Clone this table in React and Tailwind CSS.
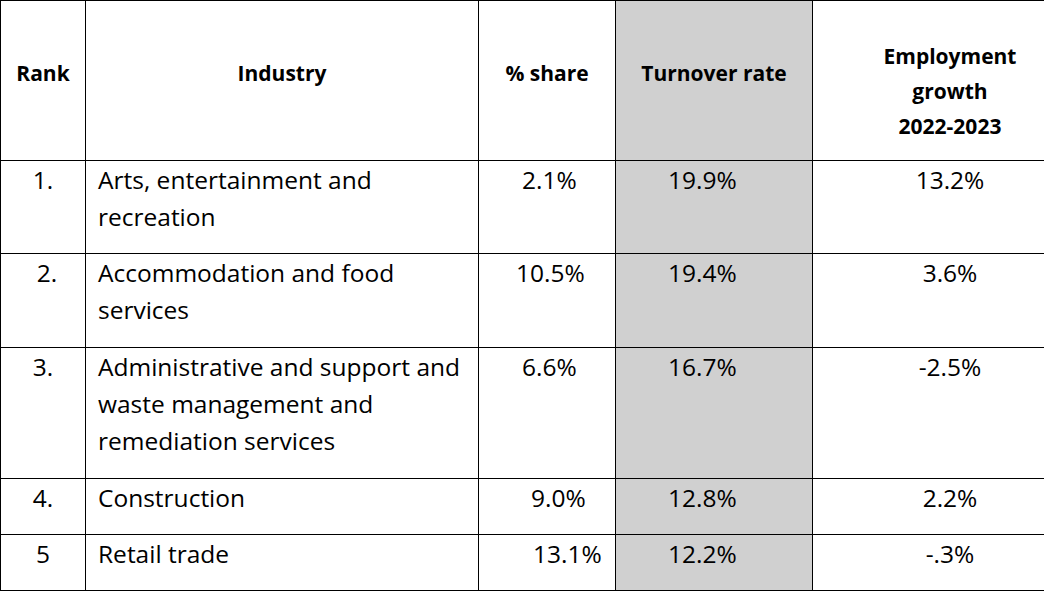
import React from "react";

const rows = [
  { rank: "1.", rankPad: "pl-0", name: ["Arts, entertainment and", "recreation"], share: "2.1%", sharePad: "pl-[43px]", turnover: "19.9%", growth: "13.2%", h: "h-[93px]" },
  { rank: "2.", rankPad: "pl-[8px]", name: ["Accommodation and food", "services"], share: "10.5%", sharePad: "pl-[37px]", turnover: "19.4%", growth: "3.6%", h: "h-[94px]" },
  { rank: "3.", rankPad: "pl-0", name: ["Administrative and support and", "waste management and", "remediation services"], share: "6.6%", sharePad: "pl-[43px]", turnover: "16.7%", growth: "-2.5%", h: "h-[131px]" },
  { rank: "4.", rankPad: "pl-0", name: ["Construction"], share: "9.0%", sharePad: "pl-[52px]", turnover: "12.8%", growth: "2.2%", h: "h-[56px]" },
  { rank: "5", rankPad: "pl-0", name: ["Retail trade"], share: "13.1%", sharePad: "pl-[54px]", turnover: "12.2%", growth: "-.3%", h: "h-[56px]" },
];

export default function App() {
  return (
    <div className="w-[1044px] h-[591px] overflow-hidden bg-white text-black font-['Open_Sans',sans-serif]">
      <table className="w-[1087px] table-fixed border-collapse">
        <colgroup>
          <col className="w-[85px]" />
          <col className="w-[393px]" />
          <col className="w-[137px]" />
          <col className="w-[197px]" />
          <col className="w-[275px]" />
        </colgroup>
        <thead>
          <tr className="h-[160px] text-[21px] font-bold leading-[35px]">
            <th className="border border-black align-top pt-[55px] text-center">Rank</th>
            <th className="border border-black align-top pt-[55px] text-center">Industry</th>
            <th className="border border-black align-top pt-[55px] text-center">% share</th>
            <th className="border border-black align-top pt-[55px] text-center bg-[#d0d0d0]">Turnover rate</th>
            <th className="border border-black align-top pt-[38px] text-center">
              Employment
              <br />
              growth
              <br />
              2022-2023
            </th>
          </tr>
        </thead>
        <tbody className="text-[24.5px] leading-[37px]">
          {rows.map((r) => (
            <tr key={r.rank} className={r.h}>
              <td className={`border border-black align-top pt-0 text-center ${r.rankPad}`}>{r.rank}</td>
              <td className="border border-black align-top pt-0 pl-[12px]">
                {r.name.map((line) => (
                  <div key={line}>{line}</div>
                ))}
              </td>
              <td className={`border border-black align-top pt-0 ${r.sharePad}`}>{r.share}</td>
              <td className="border border-black align-top pt-0 pl-[52px] bg-[#d0d0d0]">{r.turnover}</td>
              <td className="border border-black align-top pt-0 text-center">{r.growth}</td>
            </tr>
          ))}
        </tbody>
      </table>
    </div>
  );
}
